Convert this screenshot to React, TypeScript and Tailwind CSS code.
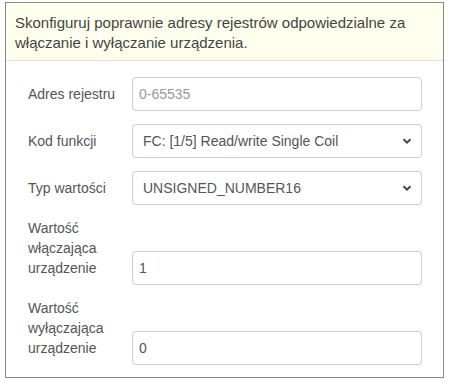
import { ReactNode } from "react";

function Chevron() {
  return (
    <svg
      aria-hidden
      viewBox="0 0 10 6"
      className="pointer-events-none absolute right-[10px] top-1/2 h-[6px] w-[10px] -translate-y-1/2 text-[#444]"
    >
      <path d="M1.5 1.2 L5 4.6 L8.5 1.2" fill="none" stroke="currentColor" strokeWidth="2" />
    </svg>
  );
}

function Row({ label, children, last }: { label: ReactNode; children: ReactNode; last?: boolean }) {
  return (
    <div className={`flex items-end ${last ? "" : "mb-[13px]"}`}>
      <label className="w-[121px] shrink-0 pb-[7px] pl-[17px] pr-[10px] leading-5 text-[#555]">{label}</label>
      <div className="relative w-[290px]">{children}</div>
    </div>
  );
}

const field =
  "block h-[34px] w-full rounded-[4px] border border-[#ccc] bg-white text-[14px] text-[#555] outline-none";

export default function App() {
  return (
    <div className="bg-white pl-[5px] pt-[2px] font-['Liberation_Sans',Arial,sans-serif] text-[14px]">
      <div className="w-[439px] border border-[#888] bg-white">
        <div className="border-b border-[#ddd] bg-[#ffffee] px-[9px] pb-[7px] pt-[10px] text-[15px] leading-5 text-[#444]">
          Skonfiguruj poprawnie adresy rejestrów odpowiedzialne za włączanie i wyłączanie urządzenia.
        </div>
        <div className="pb-[12px] pt-[16px] pl-[5px]">
          <Row label="Adres rejestru">
            <input className={`${field} px-[6px] placeholder:text-[#999]`} placeholder="0-65535" />
          </Row>
          <Row label="Kod funkcji">
            <select className={`${field} appearance-none pl-[10px]`} defaultValue="1">
              <option value="1">FC: [1/5] Read/write Single Coil</option>
            </select>
            <Chevron />
          </Row>
          <Row label="Typ wartości">
            <select className={`${field} appearance-none pl-[10px]`} defaultValue="u16">
              <option value="u16">UNSIGNED_NUMBER16</option>
            </select>
            <Chevron />
          </Row>
          <Row label="Wartość włączająca urządzenie">
            <input className={`${field} px-[6px]`} defaultValue="1" />
          </Row>
          <Row label="Wartość wyłączająca urządzenie" last>
            <input className={`${field} px-[6px]`} defaultValue="0" />
          </Row>
        </div>
      </div>
    </div>
  );
}
